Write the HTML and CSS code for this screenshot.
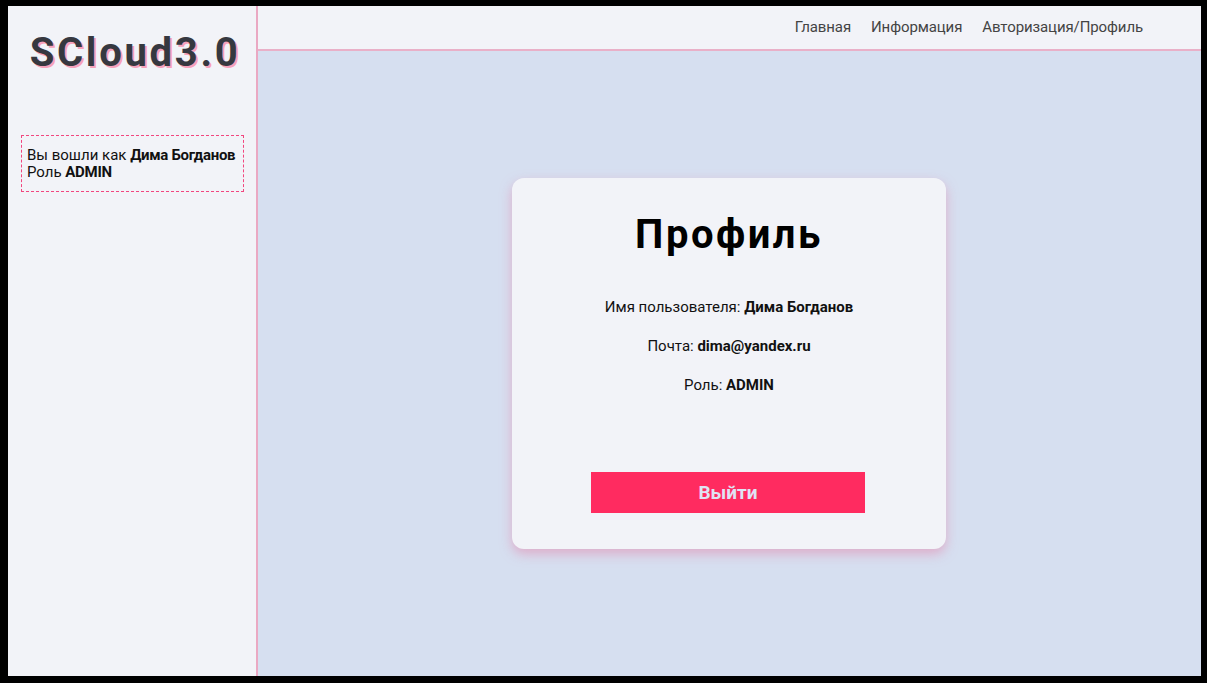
FILE: index.html
```html
<!DOCTYPE html>
<html lang="ru">
<head>
<meta charset="utf-8">
<title>SCloud3.0</title>
<link rel="stylesheet" href="styles.css">
</head>
<body>
<div class="app">
  <aside class="sidebar">
    <div class="logo">SCloud3.0</div>
    <div class="userbox">
      <div class="line">Вы вошли как <b>Дима Богданов</b></div>
      <div class="line">Роль <b>ADMIN</b></div>
    </div>
  </aside>
  <div class="right">
    <header class="header">
      <nav class="nav">
        <a href="#">Главная</a>
        <a href="#">Информация</a>
        <a href="#">Авторизация/Профиль</a>
      </nav>
    </header>
    <main class="main">
      <section class="card">
        <h1 class="card-title">Профиль</h1>
        <p class="row">Имя пользователя: <b>Дима Богданов</b></p>
        <p class="row">Почта: <b>dima@yandex.ru</b></p>
        <p class="row">Роль: <b>ADMIN</b></p>
        <button class="logout">Выйти</button>
      </section>
    </main>
  </div>
</div>
</body>
</html>
```
FILE: styles.css
```css
* { box-sizing: border-box; }
html, body { height: 100%; }
body {
  margin: 0;
  background: #000;
  padding: 6px 6px 7px 8px;
  font-family: Roboto, "Noto Sans", "Liberation Sans", sans-serif;
  color: #111;
}
.app {
  display: flex;
  height: 670px;
  background: #d6dff0;
}
.sidebar {
  width: 250px;
  flex: none;
  background: #f2f3f8;
  border-right: 2px solid #eaa8c3;
  padding: 23px 12px 0 13px;
}
.logo {
  font-size: 40px;
  font-weight: 700;
  letter-spacing: 2.7px;
  color: #363840;
  text-shadow: 2px 2px 0 #f6a1bb;
  text-align: center;
  line-height: 47px;
  padding-left: 5px;
}
.userbox {
  margin-top: 59px;
  border: 1px dashed #f2467f;
  padding: 11px 5px 10px 5px;
  font-size: 15px;
  line-height: 17px;
  color: #111;
}
.line { white-space: nowrap; }
.userbox b { font-weight: 700; letter-spacing: -0.3px; }
.right {
  flex: 1;
  display: flex;
  flex-direction: column;
}
.header {
  height: 45px;
  flex: none;
  background: #f2f3f8;
  border-bottom: 2px solid #e9b0c8;
  display: flex;
  justify-content: flex-end;
  align-items: center;
  padding-right: 58px;
}
.nav { display: flex; gap: 20px; padding-bottom: 1px; }
.nav a {
  color: #444;
  text-decoration: none;
  font-size: 15px;
  letter-spacing: -0.1px;
}
.main {
  flex: 1;
  display: flex;
  align-items: center;
  justify-content: center;
  padding-right: 1px;
}
.card {
  width: 434px;
  height: 371px;
  background: #f2f3f8;
  border-radius: 12px;
  box-shadow: 0 5px 12px rgba(226, 140, 176, 0.6);
  display: flex;
  flex-direction: column;
  align-items: center;
  padding-top: 29px;
}
.card-title {
  margin: 0 0 35px;
  font-size: 40px;
  font-weight: 700;
  letter-spacing: 2.5px;
  line-height: 56px;
  color: #000;
}
.row {
  margin: 0 0 20px;
  font-size: 15px;
  line-height: 19px;
  color: #111;
}
.row b { font-weight: 700; }
.logout {
  margin-top: 57px;
  margin-right: 2px;
  width: 274px;
  height: 41px;
  border: none;
  background: #ff2b60;
  color: #dfe3f4;
  font-family: Roboto, "Noto Sans", sans-serif;
  font-size: 19px;
  font-weight: 700;
  cursor: pointer;
}
```
